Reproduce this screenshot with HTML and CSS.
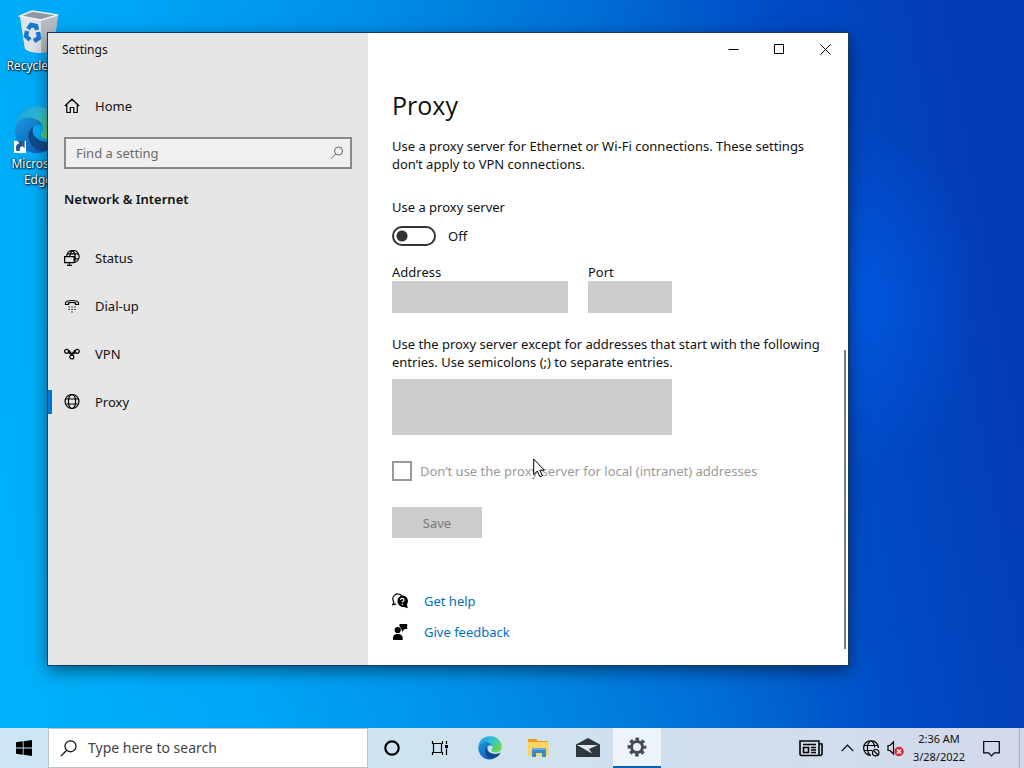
FILE: index.html
```html
<!DOCTYPE html>
<html lang="en">
<head>
<meta charset="utf-8">
<title>Settings</title>
<link rel="stylesheet" href="styles.css">
</head>
<body>
<div class="screen">
  <main class="desktop">
    <div class="shortcuts">
      <a class="shortcut" href="#">
        <svg class="shortcut-icon" width="48" height="48" viewBox="0 0 48 48">
          <path d="M6 8 18 3 44 7 39 43Q28 47 11 41Z" fill="#cfd6dc"/>
          <path d="M6 8 27 12 27 45Q15 45 11 41Z" fill="#dfe4e8"/>
          <path d="M27 12 44 7 39 42 27 45Z" fill="#b4bdc5"/>
          <path d="M6 8 18 3 44 7 27 12Z" fill="#8c979f" stroke="#eef2f5" stroke-width="1.5"/>
          <path d="M14 21l3-4 5 1 1 4M24 24l1 6-5 3M16 32l-4-4 1-5" fill="none" stroke="#1a78d0" stroke-width="4.400"/>
        </svg>
        <span>Recycle Bin</span>
      </a>
      <a class="shortcut" href="#">
        <svg class="shortcut-icon" width="48" height="48" viewBox="0 0 24 24">
          <use href="#edge"/>
          <path d="M0 17.500h6v6H0z" fill="#fff"/>
          <path d="M1.200 22.500q-1-3 1.500-4l-1-1h3.600v3.600l-1.100-1.100q-1.700.5-1.200 2.500z" fill="#245a9c"/>
        </svg>
        <span>Microsoft Edge</span>
      </a>
    </div>

    <section class="window">
      <aside class="sidebar">
        <div class="title">Settings</div>
        <a class="nav-item" href="#">
          <svg width="16" height="16" viewBox="0 0 16 16"><path d="M.8 8 8 1.200 15.200 8M2.800 6.500v8h3.500V9.500h3.500v5h3.500v-8"/></svg>
          <span>Home</span>
        </a>
        <label class="find">
          <input type="text" placeholder="Find a setting" aria-label="Find a setting">
          <svg width="14" height="14" viewBox="0 0 14 14"><circle cx="8.500" cy="5" r="4"/><path d="M5.500 8 1 12.800"/></svg>
        </label>
        <h2>Network &amp; Internet</h2>
        <nav>
          <a class="nav-item" href="#">
            <svg width="16" height="16" viewBox="0 0 16 16"><path d="M2.700 6.200A6.200 6.200 0 1 1 10.500 12.500M3.300 3.800h11M8.500 .6Q6 2.500 5.800 6.500M8.500.6q3.800 3 2.300 10.500M10.200 8.800h4.300M.6 6.700h9.600v6H.6zM5.400 12.700v2.500M3 15.400h5"/></svg>
            <span>Status</span>
          </a>
          <a class="nav-item" href="#">
            <svg width="16" height="16" viewBox="0 0 16 16"><path d="M1.500 6.500V5q1-2.500 6.500-2.500T14.500 5v1.500h-3V4.900q-3.500-1-7 0v1.600z"/><path stroke-dasharray="1.300 1.700" d="M4.400 9h8M4.400 11.500h8"/><path d="M7.400 14h1.300"/></svg>
            <span>Dial-up</span>
          </a>
          <a class="nav-item" href="#">
            <svg width="16" height="16" viewBox="0 0 16 16"><circle cx="2.600" cy="5.300" r="2"/><circle cx="13.200" cy="5.300" r="2"/><circle cx="7.800" cy="11" r="2"/><path d="M4.300 4 9.200 9.500M11.500 4 6.500 9.500M4.400 6.500l2 1.500M11.400 6.500l-2 1.500"/></svg>
            <span>VPN</span>
          </a>
          <a class="nav-item current" href="#" aria-current="page">
            <svg width="16" height="16" viewBox="0 0 16 16"><circle cx="8" cy="7.500" r="7"/><ellipse cx="8" cy="7.500" rx="3.600" ry="7"/><path d="M1.300 5h13.400M1.300 10h13.400"/></svg>
            <span>Proxy</span>
          </a>
        </nav>
      </aside>

      <div class="content">
        <div class="controls">
          <button aria-label="Minimize"><svg width="11" height="11" viewBox="0 0 11 11"><path d="M.5 5.500h10"/></svg></button>
          <button aria-label="Maximize"><svg width="11" height="11" viewBox="0 0 11 11"><path d="M.5.5h9v9h-9z"/></svg></button>
          <button aria-label="Close"><svg width="11" height="11" viewBox="0 0 11 11"><path d="m.5.500 10 10M10.500.500l-10 10"/></svg></button>
        </div>
        <form class="page">
          <h1>Proxy</h1>
          <p class="intro">Use a proxy server for Ethernet or Wi-Fi connections. These settings don’t apply to VPN connections.</p>
          <label class="switch-label" for="use-proxy">Use a proxy server</label>
          <div class="switch-row">
            <input class="switch" type="checkbox" role="switch" id="use-proxy">
            <span>Off</span>
          </div>
          <div class="fields">
            <div class="field address"><label for="address">Address</label><input id="address" type="text" disabled></div>
            <div class="field port"><label for="port">Port</label><input id="port" type="text" disabled></div>
          </div>
          <label class="except-label" for="except">Use the proxy server except for addresses that start with the following entries. Use semicolons (;) to separate entries.</label>
          <textarea class="except" id="except" disabled></textarea>
          <label class="check"><input type="checkbox" disabled><span>Don’t use the proxy server for local (intranet) addresses</span></label>
          <button class="save" type="button" disabled>Save</button>
          <div class="links">
            <div class="link-row">
              <svg width="16" height="16" viewBox="0 0 16 16"><path d="M2 9.300A5 5 0 1 1 9.800 2.800M2 9 .7 11.800l3.600-1" fill="none" stroke="#000" stroke-width="1.200"/><path d="M10.300 2.500a5.600 5.600 0 0 1 4.600 8.800l.9 4-3.600-1.400A5.700 5.700 0 1 1 10.300 2.500"/><path d="M8.600 7q0-1.600 1.700-1.600T12 6.900q0 .9-1 1.500-.7.400-.7 1.200M10.300 10.800v1.300" fill="none" stroke="#fff" stroke-width="1.200"/></svg>
              <a href="#">Get help</a>
            </div>
            <div class="link-row">
              <svg width="16" height="16" viewBox="0 0 16 16"><circle cx="5.700" cy="6" r="3.100"/><path d="M1 16v-2q0-4 4.700-4t5 4v2zM7.500 0h7.700v5h-2.600L10 8V5.500H9Q8.900 3 7.500 2.300z"/></svg>
              <a href="#">Give feedback</a>
            </div>
          </div>
        </form>
        <div class="scrollbar"></div>
      </div>
    </section>
  </main>

  <footer class="taskbar">
    <button class="start" aria-label="Start"><svg width="16" height="16" viewBox="0 0 16 16"><path d="M0 2.300 6.800 1.300v6.300H0zM7.600 1.200 16 0v7.600H7.600zM0 8.400h6.800v6.300L0 13.700zM7.600 8.400H16V16l-8.400-1.200z"/></svg></button>
    <label class="task-search">
      <svg width="17" height="17" viewBox="0 0 17 17"><circle cx="10.500" cy="6.300" r="5.500"/><path d="M6.500 10.500.8 16.200"/></svg>
      <input type="text" placeholder="Type here to search" aria-label="Type here to search">
    </label>
    <div class="apps">
      <button aria-label="Cortana"><svg width="16" height="16" viewBox="0 0 16 16"><circle cx="8" cy="8" r="6.700" fill="none" stroke="#000" stroke-width="2.200"/></svg></button>
      <button aria-label="Task View"><svg width="18" height="16" viewBox="0 0 18 16"><path d="M1.500 1v2.500h10V1M1.500 15v-2.500h10V15M2.500 3.500v9M10.500 3.500v9M15.500 1v3M15.500 8.500V15" fill="none" stroke="#000" stroke-width="1.200"/><path d="M14 5h3v3h-3z"/></svg></button>
    </div>
    <div class="apps pinned">
      <button aria-label="Microsoft Edge">
        <svg width="24" height="24" viewBox="0 0 24 24">
          <defs>
            <linearGradient id="edge-top" x1="0" x2="1" y1="0" y2=".6"><stop offset="0" stop-color="#1893d8"/><stop offset=".5" stop-color="#2fc0d8"/><stop offset="1" stop-color="#68d850"/></linearGradient>
            <linearGradient id="edge-left" x1="0" x2=".7" y1="0" y2="1"><stop offset="0" stop-color="#199be2"/><stop offset="1" stop-color="#0f5db6"/></linearGradient>
          </defs>
          <g id="edge">
            <path d="M.3 10C1.300 4 6 .2 12 .2c7 0 11.700 5 11.700 10.300 0 3.700-2.700 6-6 6-2.500 0-4.200-1-4.200-2 0-.8 1-1.200 1-3C14.500 8.500 11 6 7.500 6 4 6 1.500 8 .3 10" fill="url(#edge-top)"/>
            <path d="M.3 11C.8 8 4 5.700 7.500 5.700c3.700 0 7 2.600 7 5.300 0-1-1.500-2-3-1.500C8 10.500 7 13.500 8.500 17s5 5.500 8 5.200C9 26 .1 21 .3 11" fill="url(#edge-left)"/>
            <path d="M9.800 10.300c-3.300 2-3.300 6.200-.8 9.400 2.300 2.900 5.700 3.300 7.700 2.400 2.400-1 4.300-2.700 5.500-4.700.4-.6-.2-.8-.7-.5-4.500 2.400-11 .3-12-3.400-.3-1.200 0-2.300.3-3.200" fill="#114a8b"/>
          </g>
        </svg>
      </button>
      <button aria-label="File Explorer"><svg width="22" height="20" viewBox="0 0 22 20"><path d="M0 1h8l2 2h10v6H0z" fill="#e8a012"/><path d="M0 4h20.500v14H0z" fill="#ffd362"/><path d="M4 10h14v9h-4v-4H8v4H4z" fill="#3989c9"/><path d="M4 10h14v2H4z" fill="#62aee2"/></svg></button>
      <button aria-label="Mail"><svg width="24" height="20" viewBox="0 0 24 20"><path d="M0 6.500 12 0l12 6.500V19H0z" fill="#2f363d"/><path d="M1 7 22 7 13 11 16 15.500z" fill="#dce8f2"/></svg></button>
      <button class="active" aria-label="Settings"><svg width="20" height="20" viewBox="0 0 20 20"><circle cx="10" cy="10" r="5.500" fill="none" stroke="#45484c" stroke-width="3"/><circle cx="10" cy="10" r="7.900" fill="none" stroke="#45484c" stroke-width="3" stroke-dasharray="3.400 2.805" stroke-dashoffset="1.700"/></svg></button>
    </div>
    <div class="tray">
      <button class="news" aria-label="News"><svg width="24" height="17" viewBox="0 0 24 17"><path d="M1 1h19v14.500H2.500Q1 15.500 1 14zM20 4h3v9.500q0 2-2 2h-2M4 4.500h13M4.500 7.500h5v5h-5zM12 7.500h5M12 10h5M12 12.500h5" fill="none" stroke="#000" stroke-width="1.600"/></svg></button>
      <button class="chevron" aria-label="Show hidden icons"><svg width="13" height="8" viewBox="0 0 13 8"><path d="m.7 7.200 5.800-6 5.800 6" fill="none" stroke="#000" stroke-width="1.200"/></svg></button>
      <button class="network" aria-label="Network"><svg width="17" height="17" viewBox="0 0 17 17"><g fill="none" stroke="#000" stroke-width="1.200"><path d="M8 15.400A7.400 7.400 0 1 1 15.400 8M7.500 15.400Q4.400 13 4.400 8T8 .6q3.600 2.400 3.600 7M1.300 5.500h13.400M1.300 10.500H9"/><circle cx="12.700" cy="12.700" r="3.200"/><path d="m10.400 10.400 4.600 4.600"/></g></svg></button>
      <button class="sound" aria-label="Volume"><svg width="17" height="17" viewBox="0 0 17 17"><path d="M1 5.500h2l3.500-3.500v12L3 10.500H1z" fill="none" stroke="#000" stroke-width="1.200"/><circle cx="12" cy="11.500" r="4.800" fill="#d9303c"/><path d="m10 9.500 4 4M14 9.500l-4 4" stroke="#fff" stroke-width="1.400"/></svg></button>
      <div class="clock"><time>2:36 AM</time><time>3/28/2022</time></div>
      <button class="notify" aria-label="Notifications"><svg width="17" height="17" viewBox="0 0 17 17"><path d="M.7 1.500h15.600v11.300h-5l-2.800 3-2.800-3h-5z" fill="none" stroke="#000" stroke-width="1.200"/></svg></button>
      <button class="peek" aria-label="Show desktop"></button>
    </div>
  </footer>
  <svg class="cursor" width="13" height="20" viewBox="0 0 13 20"><path d="M.7 1v15.500l3.600-3.400 2.600 5.600 2.400-1-2.500-5.500h4.500z" fill="#fff" stroke="#000"/></svg>
</div>
</body>
</html>
```
FILE: styles.css
```css
* { box-sizing: border-box; }
body {
  margin: 0;
  font: 13px/18px "Noto Sans", "Open Sans", sans-serif;
  color: #111;
}
button, input, textarea { font: inherit; color: inherit; margin: 0; border-radius: 0; }
button { border: 0; padding: 0; background: none; display: flex; align-items: center; justify-content: center; }
a { color: inherit; text-decoration: none; }
svg { display: block; flex: none; }

.screen {
  position: relative;
  height: 100vh;
  display: flex;
  flex-direction: column;
  overflow: hidden;
  background:
    radial-gradient(ellipse 120px 170px at 860px 300px, #0060f099, #0060f000),
    linear-gradient(80deg, #00b2fa 0%, #00a6f6 22%, #0090e8 42%, #006fd6 62%, #004cc6 78%, #043ab4 95%);
}
.desktop { flex: 1; position: relative; }

.shortcuts { display: flex; flex-direction: column; gap: 32px; width: 76px; padding-top: 8px; }
.shortcut {
  display: flex; flex-direction: column; align-items: center; gap: 2px;
  font-size: 12px; line-height: 16px; text-align: center; color: #fff;
  text-shadow: 1px 1px 2px #000, 0 0 2px #000;
}

.window {
  position: absolute;
  inset: 33px 176px 63px 48px;
  display: flex;
  background: #fff;
  box-shadow: 0 0 0 1px #17395f, 0 5px 16px #0008;
}
.sidebar { width: 320px; background: #e6e6e6; flex: none; }
.title { height: 32px; padding: 8px 14px; font-size: 12px; line-height: 18px; margin-bottom: 17px; }
.nav-item { height: 48px; display: flex; align-items: center; gap: 15px; padding: 0 16px; }
.nav-item svg, .find svg, .controls svg, .task-search svg { fill: none; stroke: #000; stroke-width: 1.2; }
.nav-item.current { background: linear-gradient(#0078d7, #0078d7) 0 50% / 4px 24px no-repeat; }
.find {
  display: flex; align-items: center; height: 32px; margin: 7px 16px 20px; padding: 0 6px 0 10px;
  border: 2px solid #888; background: #f0f0f0;
}
.find input { flex: 1; min-width: 0; border: 0; background: none; padding: 0; }
.find input::placeholder { color: #6a6a6a; opacity: 1; }
.find svg { stroke: #666; stroke-width: 1; }
h2 { margin: 0 16px 25px; font-size: 13px; line-height: 20px; font-weight: 600; }

.content { flex: 1; min-width: 0; position: relative; }
.controls { display: flex; justify-content: flex-end; height: 32px; }
.controls button { width: 46px; }
.controls svg { stroke-width: 1; }
.page { display: flex; flex-direction: column; align-items: flex-start; padding: 22px 20px 0 24px; }
h1 { margin: 0 0 14px; font: 400 25px/36px "Open Sans", "Noto Sans", sans-serif; }
.intro { margin: 0 0 25px; }
.switch-label { margin-bottom: 10px; }
.switch-row { display: flex; align-items: center; gap: 12px; height: 20px; margin-bottom: 17px; }
.switch {
  appearance: none; width: 44px; height: 20px; border: 2px solid #333; border-radius: 10px;
  background: radial-gradient(circle at 8px 8px, #333 5px, transparent 6px);
}
.fields { display: flex; gap: 20px; margin-bottom: 22px; }
.field { display: flex; flex-direction: column; }
.field input { height: 32px; width: 100%; border: 0; background: #ccc; }
.address { width: 176px; }
.port { width: 84px; }
.except-label { margin-bottom: 8px; }
.except { width: 280px; height: 56px; border: 0; background: #ccc; resize: none; margin-bottom: 26px; }
.check { display: flex; align-items: center; gap: 8px; height: 20px; color: #999; margin-bottom: 26px; }
.check input { appearance: none; width: 20px; height: 20px; border: 2px solid #999; }
.save { width: 90px; height: 31px; background: #ccc; color: #7a7a7a; margin-bottom: 47px; }
.link-row { display: flex; align-items: center; gap: 16px; height: 31px; }
.link-row a { color: #0070c0; }
.scrollbar { position: absolute; right: 2px; bottom: 16px; width: 2px; height: 299px; background: #7a7a7a; }
.cursor { position: absolute; left: 533px; top: 458px; }

.taskbar { display: flex; height: 40px; background: linear-gradient(90deg, #cce6f4, #d0e0ee 60%, #d2d9eb); }
.start { width: 48px; }
.task-search {
  display: flex; align-items: center; gap: 11px; width: 320px; padding: 0 11px;
  background: #fff; border: 1px solid #b8c4cc;
}
.task-search input { flex: 1; min-width: 0; border: 0; padding: 0; font-size: 14px; }
.task-search input::placeholder { color: #444; opacity: 1; }
.apps { display: flex; }
.apps button { width: 48px; }
.pinned { gap: 1px; margin-left: 2px; }
.apps .active { background: #edf4fa; border-bottom: 2px solid #0067c0; }
.tray { display: flex; margin-left: auto; }
.news { width: 48px; }
.chevron { width: 24px; }
.network, .sound { width: 24px; }
.clock { display: flex; flex-direction: column; justify-content: center; width: 64px; font-size: 11px; text-align: center; white-space: nowrap; }
.notify { width: 40px; }
.peek { width: 5px; margin-left: 8px; border-left: 1px solid #a8b2c4; }
```
